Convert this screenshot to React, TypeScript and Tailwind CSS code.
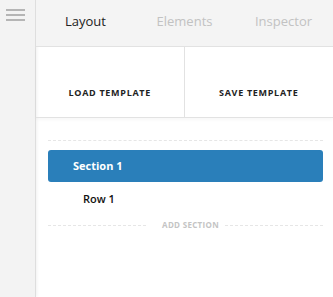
const font = { fontFamily: '"Open Sans", "Noto Sans", sans-serif' };

function Hamburger() {
  return (
    <div className="flex flex-col gap-[3px] pt-[9px] pl-[6px]">
      <span className="block h-[2px] w-[19px] bg-[#b5b5b5]" />
      <span className="block h-[2px] w-[19px] bg-[#b5b5b5]" />
      <span className="block h-[2px] w-[19px] bg-[#b5b5b5]" />
    </div>
  );
}

const App: React.FC = () => {
  const tabs = ["Layout", "Elements", "Inspector"];

  return (
    <div
      className="flex h-[297px] w-[333px] overflow-hidden bg-white"
      style={font}
    >
      {/* Sidebar */}
      <aside className="w-[36px] shrink-0 border-r border-[#dedede] bg-[#f3f3f3] shadow-[1px_0_3px_rgba(0,0,0,0.06)]">
        <Hamburger />
      </aside>

      <main className="flex flex-1 flex-col">
        {/* Tabs */}
        <nav className="grid h-[47px] grid-cols-3 border-b border-[#e2e2e2] bg-[#f4f4f4]">
          {tabs.map((t, i) => (
            <div
              key={t}
              className={
                "flex items-center justify-center pb-[3px] text-[13px] " +
                (i === 0 ? "text-[#222]" : "text-[#c2c2c2]")
              }
            >
              {t}
            </div>
          ))}
        </nav>

        {/* Template buttons */}
        <div className="grid h-[71px] grid-cols-2 border-b border-[#e2e2e2] shadow-[0_2px_3px_rgba(0,0,0,0.03)]">
          <button className="flex items-end justify-center border-r border-[#e2e2e2] pb-[18px] text-[9px] font-bold tracking-[0.7px] text-[#222]">
            LOAD TEMPLATE
          </button>
          <button className="flex items-end justify-center pb-[18px] text-[9px] font-bold tracking-[0.7px] text-[#222]">
            SAVE TEMPLATE
          </button>
        </div>

        {/* Layout tree */}
        <div className="ml-[12px] mr-[10px] pt-[22px]">
          <div className="border-t border-dashed border-[#e6e6e6]" />
          <div className="mt-[9px] flex h-[32px] items-center rounded-[3px] bg-[#2a7fba] pl-[25px] text-[11px] font-bold text-white">
            Section 1
          </div>
          <div className="flex h-[34px] items-center pl-[35px] text-[11px] font-semibold text-[#111]">
            Row 1
          </div>
          <div className="mt-[3px] flex items-center">
            <div className="mr-[16px] flex-1 border-t border-dashed border-[#e6e6e6]" />
            <span className="text-[8px] font-bold tracking-[0.3px] text-[#c4c4c4]">
              ADD SECTION
            </span>
            <div className="ml-[6px] flex-1 border-t border-dashed border-[#e6e6e6]" />
          </div>
        </div>
      </main>
    </div>
  );
};

export default App;
